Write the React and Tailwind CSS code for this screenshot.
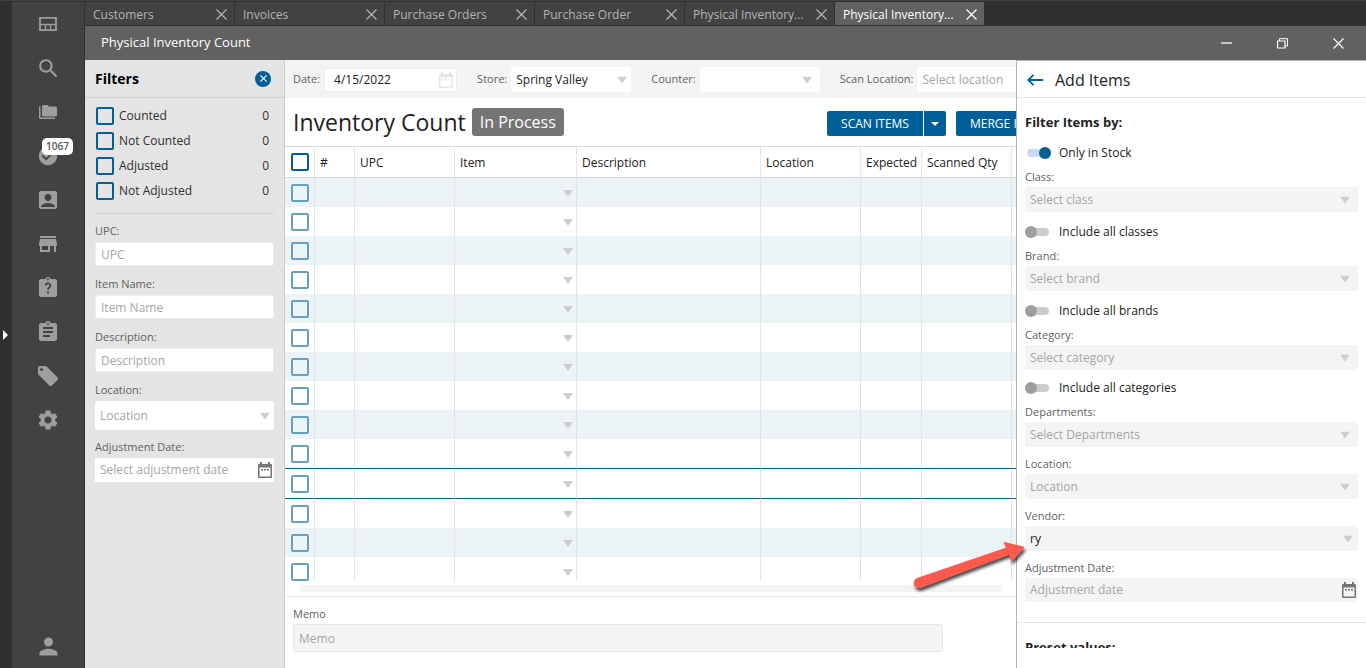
import { useState } from "react";
import clsx from "clsx";
import {
  MdSearch,
  MdCheckCircle,
  MdAccountBox,
  MdAssignment,
  MdSettings,
  MdPerson,
} from "react-icons/md";

const TABS = [
  "Customers",
  "Invoices",
  "Purchase Orders",
  "Purchase Order",
  "Physical Inventory...",
  "Physical Inventory...",
];

const COUNT_FILTERS = ["Counted", "Not Counted", "Adjusted", "Not Adjusted"];

const COLUMNS = [
  { label: "#", width: "w-[40px]" },
  { label: "UPC", width: "w-[100px]" },
  { label: "Item", width: "w-[122px]" },
  { label: "Description", width: "w-[184px]" },
  { label: "Location", width: "w-[100px]" },
  { label: "Expected", width: "w-[61px]" },
  { label: "Scanned Qty", width: "w-[90px]" },
  { label: "", width: "w-[90px]" },
];

const ROWS = Array.from({ length: 14 }, (_, i) => i);
const SELECTED_ROW = 10;

/* ---------- icons ---------- */

function CloseIcon({ className }) {
  return (
    <svg viewBox="0 0 11 11" className={clsx("w-[11px] h-[11px]", className)} stroke="currentColor" strokeWidth="1.2" fill="none">
      <path d="M0.5 0.5 10.5 10.5M10.5 0.5 0.5 10.5" />
    </svg>
  );
}

function Caret({ className }) {
  return (
    <svg viewBox="0 0 10 7" className={clsx("w-[10px] h-[7px] text-[#cdcdcd]", className)} fill="currentColor">
      <path d="M0 0h10L5 7z" />
    </svg>
  );
}

function CalendarIcon({ className }) {
  return (
    <svg viewBox="0 0 14 16" className={clsx("w-[14px] h-[16px]", className)} fill="currentColor">
      <path fillRule="evenodd" d="M2 0h2v2h6V0h2v2h1a1 1 0 0 1 1 1v12a1 1 0 0 1-1 1H1a1 1 0 0 1-1-1V3a1 1 0 0 1 1-1h1zM1.500 5.500v9h11v-9z" />
      <path d="M3 7h2v1.500H3zM6 7h2v1.500H6zM9 7h2v1.500H9z" />
    </svg>
  );
}

function DashboardIcon() {
  return (
    <svg viewBox="0 0 24 24" className="w-6 h-6" fill="none" stroke="currentColor">
      <path strokeWidth="1.800" d="M4 5.900h16v12.200H4z" />
      <path strokeWidth="1.300" d="M4 12.500h16M9.500 12.500V18M14.500 12.500V18" />
    </svg>
  );
}

function FoldersIcon() {
  return (
    <svg viewBox="0 0 24 24" className="w-6 h-6" fill="currentColor">
      <path d="M7.500 5h4l1.500 1.500h6.500a1.500 1.500 0 0 1 1.500 1.500v7a1.500 1.500 0 0 1-1.500 1.500h-12A1.500 1.500 0 0 1 6 15V6.500A1.500 1.500 0 0 1 7.500 5z" />
      <path d="M3 6.500h1.500V17.500H19V19H4.500A1.500 1.500 0 0 1 3 17.500z" />
    </svg>
  );
}

function StoreIcon() {
  return (
    <svg viewBox="0 0 24 24" className="w-6 h-6" fill="currentColor">
      <path fillRule="evenodd" d="M4 4h16v2H4zM4 7h16l1 5v2h-1v6h-2v-6h-4v6H4v-6H3v-2zM6 14v4h6v-4z" />
    </svg>
  );
}

function HelpClipboardIcon() {
  return (
    <svg viewBox="0 0 24 24" className="w-6 h-6">
      <path fill="currentColor" fillRule="evenodd" d="M19 3h-4.200a3 3 0 0 0-5.600 0H5a2 2 0 0 0-2 2v14a2 2 0 0 0 2 2h14a2 2 0 0 0 2-2V5a2 2 0 0 0-2-2zM12 2.600a.9.9 0 1 1 0 1.800.9.9 0 0 1 0-1.800z" />
      <path d="M9.700 9.600a2.300 2.300 0 1 1 3.700 1.800c-.9.700-1.400 1-1.400 2.400" fill="none" stroke="#424242" strokeWidth="1.800" />
      <path d="M11 15.500h2v2h-2z" fill="#424242" />
    </svg>
  );
}

function TagIcon() {
  return (
    <svg viewBox="0 0 24 24" className="w-6 h-6" fill="currentColor">
      <path fillRule="evenodd" d="M4 2h5a3 3 0 0 1 2.100.9l10.300 10.300a2 2 0 0 1 0 2.800L16 21.400a2 2 0 0 1-2.800 0L2.900 11.100A3 3 0 0 1 2 9V4a2 2 0 0 1 2-2zM5.500 4a1.500 1.500 0 1 0 0 3 1.500 1.500 0 0 0 0-3z" />
    </svg>
  );
}

/* ---------- form parts ---------- */

function Checkbox({ id, faded, label }) {
  return (
    <input
      type="checkbox"
      id={id}
      aria-label={label}
      className={clsx(
        "appearance-none block shrink-0 w-[18px] h-[18px] border-2 rounded-xs checked:bg-[#005f96]",
        faded ? "border-[#64a0c4]" : "border-[#005f96]"
      )}
    />
  );
}

function Select({ id, value, filled, className, caret = "right-2" }) {
  return (
    <div className="relative">
      <select
        id={id}
        defaultValue={value}
        className={clsx(
          "appearance-none block w-full rounded-xs pl-[5px] pr-5 text-[12px] outline-none",
          filled ? "text-[#212121]" : "text-[#a5a5a5]",
          className
        )}
      >
        <option>{value}</option>
      </select>
      <Caret className={clsx("absolute top-1/2 -translate-y-1/2 pointer-events-none", caret)} />
    </div>
  );
}

function FilterLabel({ htmlFor, children }) {
  return (
    <label htmlFor={htmlFor} className="block h-5 leading-5 text-[11px] text-[#616161]">
      {children}
    </label>
  );
}

function Toggle({ label, defaultChecked, className }) {
  const [on, setOn] = useState(!!defaultChecked);
  return (
    <label className={clsx("flex items-center h-4 mb-[6px] text-[12px] text-[#212121]", className)}>
      <input
        type="checkbox"
        role="switch"
        checked={on}
        onChange={() => setOn(!on)}
        className={clsx(
          "appearance-none relative w-6 h-2 rounded-full",
          "before:absolute before:-top-[2px] before:w-3 before:h-3 before:rounded-full",
          on
            ? "ml-[2px] mr-2 bg-[#c9d8fb] before:right-0 before:bg-[#005f96]"
            : "mr-[10px] bg-[#cccccc] before:left-0 before:bg-[#9e9e9e]"
        )}
      />
      {label}
    </label>
  );
}

/* ---------- page parts ---------- */

function NavButton({ label, children, badge }) {
  return (
    <button aria-label={label} className="relative flex items-center justify-center w-full h-11 text-[#9e9e9e]">
      {children}
      {badge && (
        <span className="absolute left-[30px] top-1 h-[17px] px-1 rounded-[5px] bg-white text-[10px] leading-[17px] font-semibold text-[#555]">
          {badge}
        </span>
      )}
    </button>
  );
}

function Sidebar() {
  return (
    <nav className="flex flex-col w-[73px] shrink-0 bg-[#424242] border-r border-[#303030]">
      <NavButton label="Dashboard"><DashboardIcon /></NavButton>
      <NavButton label="Search"><MdSearch size={25} /></NavButton>
      <NavButton label="Files"><FoldersIcon /></NavButton>
      <NavButton label="Tasks" badge="1067"><MdCheckCircle size={22} /></NavButton>
      <NavButton label="Contacts"><MdAccountBox size={24} /></NavButton>
      <NavButton label="Store"><StoreIcon /></NavButton>
      <NavButton label="Help"><HelpClipboardIcon /></NavButton>
      <NavButton label="Orders"><MdAssignment size={24} /></NavButton>
      <NavButton label="Tags"><TagIcon /></NavButton>
      <NavButton label="Settings"><MdSettings size={24} /></NavButton>
      <div className="mt-auto">
        <NavButton label="Account"><MdPerson size={27} /></NavButton>
      </div>
    </nav>
  );
}

function TabBar() {
  return (
    <div className="flex h-6 bg-[#303030] border-b border-[#303030]">
      {TABS.map((tab, i) => {
        const active = i === TABS.length - 1;
        return (
          <div
            key={i}
            className={clsx(
              "flex items-center justify-between w-[150px] pl-2 pr-[7px] pt-[2px] border-r border-[#303030] text-[12px]",
              active ? "bg-[#616161] text-white" : "bg-[#424242] text-[#b5b5b5]"
            )}
          >
            <a href="#">{tab}</a>
            <button aria-label={"Close " + tab}><CloseIcon /></button>
          </div>
        );
      })}
    </div>
  );
}

function TitleBar() {
  return (
    <header className="flex items-center h-[34px] pl-4 bg-[#616161] text-white">
      <h1 className="mr-auto text-[13px]">Physical Inventory Count</h1>
      <button aria-label="Minimize" className="flex justify-center w-14">
        <span className="w-[11px] h-[2px] bg-[#c4c4c4]" />
      </button>
      <button aria-label="Restore" className="flex justify-center w-14">
        <svg viewBox="0 0 11 11" className="w-[11px] h-[11px]" fill="none" stroke="currentColor">
          <path d="M0.5 3h7.500v7H0.5z" strokeWidth="1.200" />
          <path d="M2.500 3V0.700h8v7.300H8" />
        </svg>
      </button>
      <button aria-label="Close" className="flex justify-center w-14"><CloseIcon /></button>
    </header>
  );
}

function FiltersPanel() {
  return (
    <aside className="w-[200px] shrink-0 bg-[#e4e4e4] border-r border-[#cbcbcb]">
      <div className="flex items-center justify-between h-[38px] pl-[10px] pr-[13px] border-b border-[#cfcfcf]">
        <h2 className="text-[14px] font-bold text-black">Filters</h2>
        <button aria-label="Close filters" className="flex items-center justify-center w-4 h-4 rounded-full bg-[#005f96] text-white">
          <svg viewBox="0 0 8 8" className="w-[7px] h-[7px]" stroke="currentColor" strokeWidth="1.300">
            <path d="M0.500 0.500 7.500 7.500M7.500 0.500 0.500 7.500" />
          </svg>
        </button>
      </div>

      <div className="mx-[10px] pt-[5px] pb-[10px] border-b border-[#cfcfcf] text-[12px] text-[#303030]">
        {COUNT_FILTERS.map((name) => (
          <div key={name} className="flex items-center h-[25px] pl-px pr-[5px]">
            <Checkbox id={name} />
            <label htmlFor={name} className="pl-[5px] mr-auto">{name}</label>
            <span>0</span>
          </div>
        ))}
      </div>

      <form className="px-[10px] pt-[7px]">
        {["UPC", "Item Name", "Description"].map((name) => (
          <div key={name} className="grid gap-px mb-2">
            <FilterLabel htmlFor={"f-" + name}>{name}:</FilterLabel>
            <input
              id={"f-" + name}
              placeholder={name}
              className="block w-full h-6 px-[5px] rounded-xs border border-[#ececec] bg-white text-[12px] placeholder:text-[#a5a5a5] outline-none"
            />
          </div>
        ))}
        <div className="grid gap-px mb-[7px]">
          <FilterLabel htmlFor="f-location">Location:</FilterLabel>
          <Select id="f-location" value="Location" className="h-[29px] bg-white" caret="right-1" />
        </div>
        <div className="grid gap-px">
          <FilterLabel htmlFor="f-date">Adjustment Date:</FilterLabel>
          <div className="flex items-center h-6 pl-[5px] pr-[2px] bg-white">
            <input id="f-date" placeholder="Select adjustment date" className="flex-1 min-w-0 text-[12px] placeholder:text-[#a5a5a5] outline-none" />
            <CalendarIcon className="text-[#757575]" />
          </div>
        </div>
      </form>
    </aside>
  );
}

function Toolbar() {
  return (
    <div className="flex items-center h-[38px] pl-2 pt-px gap-5 bg-[#f4f4f4] text-[11px] text-[#616161] whitespace-nowrap">
      <div className="flex items-center gap-1 shrink-0">
        <label htmlFor="t-date">Date:</label>
        <div className="flex items-center w-[133px] h-6 pl-[9px] pr-[3px] rounded-xs border border-[#ececec] bg-white">
          <input id="t-date" defaultValue="4/15/2022" className="flex-1 min-w-0 text-[12px] text-[#212121] outline-none" />
          <CalendarIcon className="text-[#e6e6e6]" />
        </div>
      </div>
      <div className="flex items-center gap-1 shrink-0">
        <label htmlFor="t-store">Store:</label>
        <div className="w-[120px]"><Select id="t-store" value="Spring Valley" filled className="h-[25px] bg-white" caret="right-1" /></div>
      </div>
      <div className="flex items-center gap-1 shrink-0">
        <label htmlFor="t-counter">Counter:</label>
        <div className="w-[120px]"><Select id="t-counter" value="" className="h-[25px] bg-white" /></div>
      </div>
      <div className="flex items-center gap-1 shrink-0">
        <label htmlFor="t-scan">Scan Location:</label>
        <div className="w-[120px]"><Select id="t-scan" value="Select location" className="h-[25px] bg-white" /></div>
      </div>
    </div>
  );
}

function CountTable() {
  return (
    <div className="flex-1 min-h-0 overflow-hidden">
      <table className="table-fixed w-[817px] border-separate border-spacing-0 text-left text-[12px] text-[#212121]">
        <thead>
          <tr className="h-8">
            <th className="w-[30px] p-0 pl-[6px] border-y border-r border-y-[#d9d9d9] border-r-[#e6e6e6]">
              <Checkbox label="Select all" />
            </th>
            {COLUMNS.map((col, i) => (
              <th key={i} className={clsx("p-0 pt-[2px] pl-[5px] border-y border-r border-y-[#d9d9d9] border-r-[#e6e6e6] font-normal whitespace-nowrap", col.width)}>
                {col.label}
              </th>
            ))}
          </tr>
        </thead>
        <tbody>
          {ROWS.map((i) => {
            const selected = i === SELECTED_ROW;
            const cell = clsx(
              "p-0 border-r border-r-[#dfe4e6]",
              selected && "border-y border-y-[#005f96]"
            );
            // striping restarts after the selected row
            const shaded = i < SELECTED_ROW ? i % 2 === 0 : i === 12;
            return (
              <tr key={i} className={clsx(selected ? "h-[31px]" : "h-[29px]", shaded && "bg-[#ebf3f7]")}>
                <td className={clsx(cell, "pl-[6px]")}>
                  <Checkbox label={"Select row " + (i + 1)} faded />
                </td>
                {COLUMNS.map((col, c) => (
                  <td key={c} className={cell}>
                    {col.label === "Item" && <Caret className="ml-auto mr-[3px] mt-[2px]" />}
                  </td>
                ))}
              </tr>
            );
          })}
        </tbody>
      </table>
    </div>
  );
}

function CountSheet() {
  return (
    <main className="flex flex-col flex-1 min-w-0 overflow-hidden bg-white">
      <Toolbar />
      <div className="flex items-center h-12 pl-2 shrink-0 whitespace-nowrap">
        <div className="flex items-center gap-[6px] w-[534px] shrink-0">
          <h2 className="text-[23px] leading-7 text-[#212121]">Inventory Count</h2>
          <span className="h-7 px-2 rounded-[3px] bg-[#757575] text-white text-[16px] leading-7">In Process</span>
        </div>
        <div className="flex h-[25px] mt-[3px] text-[12px] text-white">
          <button className="w-24 shrink-0 rounded-l-xs bg-[#005f96]">SCAN ITEMS</button>
          <button aria-label="More scan options" className="flex items-center justify-center w-[22px] ml-px mr-[10px] shrink-0 rounded-r-xs bg-[#005f96]">
            <svg viewBox="0 0 8 4" className="w-2 h-1" fill="currentColor"><path d="M0 0h8L4 4z" /></svg>
          </button>
          <button className="px-[14px] shrink-0 rounded-l-xs bg-[#005f96]">MERGE ITEMS</button>
        </div>
      </div>
      <CountTable />
      <div className="h-4 pt-1 pl-[15px] pr-[14px] shrink-0 border-b border-[#e6e6e6]">
        <div className="h-[7px] bg-[#f4f4f4]" />
      </div>
      <div className="h-[71px] pt-[7px] pl-2 shrink-0">
        <FilterLabel htmlFor="memo">Memo</FilterLabel>
        <input
          id="memo"
          placeholder="Memo"
          className="block w-[650px] max-w-full h-7 px-[5px] rounded-xs border border-[#e8e8e8] bg-[#f4f4f4] text-[12px] placeholder:text-[#a5a5a5] outline-none"
        />
      </div>
    </main>
  );
}

function DrawerSelect({ name, value, filled, className, caret }) {
  return (
    <div className={className}>
      <FilterLabel htmlFor={"d-" + name}>{name}:</FilterLabel>
      <Select id={"d-" + name} value={value} filled={filled} caret={caret} className="h-[25px] bg-[#f4f4f4]" />
    </div>
  );
}

function AddItemsDrawer() {
  return (
    <aside className="flex flex-col w-[350px] shrink-0 border-l border-t border-[#b5b5b5] bg-white">
      <div className="flex items-center h-[37px] shrink-0 pt-px pl-[10px] border-b border-[#e6e6e6]">
        <button aria-label="Back" className="text-[#005f96]">
          <svg viewBox="0 0 16 12" className="w-4 h-3" fill="none" stroke="currentColor" strokeWidth="1.800">
            <path d="M16 6H1.500M6.500 0.800 1.300 6l5.200 5.200" />
          </svg>
        </button>
        <h2 className="pl-3 text-[16px] text-[#212121]">Add Items</h2>
      </div>

      <form className="px-2 pt-[14px] pb-5 border-b border-[#e6e6e6]">
        <h3 className="h-5 leading-5 text-[13px] font-bold text-[#212121]">Filter Items by:</h3>
        <Toggle label="Only in Stock" defaultChecked className="mt-[13px]" />
        <DrawerSelect name="Class" value="Select class" />
        <Toggle label="Include all classes" className="mt-3" />
        <DrawerSelect name="Brand" value="Select brand" />
        <Toggle label="Include all brands" className="mt-3" />
        <DrawerSelect name="Category" value="Select category" />
        <Toggle label="Include all categories" className="mt-[10px]" />
        <DrawerSelect name="Departments" value="Select Departments" />
        <DrawerSelect name="Location" value="Location" className="mt-[7px]" />
        <DrawerSelect name="Vendor" value="ry" filled caret="right-[5px]" className="mt-[7px]" />
        <div className="mt-[7px]">
          <FilterLabel htmlFor="d-date">Adjustment Date:</FilterLabel>
          <div className="flex items-center h-6 pl-[5px] pr-[2px] bg-[#f4f4f4]">
            <input id="d-date" placeholder="Adjustment date" className="flex-1 min-w-0 text-[12px] placeholder:text-[#a5a5a5] outline-none" />
            <CalendarIcon className="text-[#757575]" />
          </div>
        </div>
      </form>

      <div className="flex-1 min-h-0 px-2 pt-[14px] mb-5 overflow-hidden">
        <h3 className="h-5 leading-5 text-[13px] font-bold text-[#212121]">Preset values:</h3>
      </div>
    </aside>
  );
}

function PointerArrow() {
  return (
    <svg viewBox="0 0 124 60" className="absolute left-[908px] top-[536px] w-[124px] h-[60px] pointer-events-none">
      <defs>
        <filter id="arrowShadow" x="-10%" y="-10%" width="130%" height="150%">
          <feDropShadow dx="1.500" dy="3" stdDeviation="1.500" floodColor="#000" floodOpacity="0.7" />
        </filter>
      </defs>
      <path
        filter="url(#arrowShadow)"
        fill="#ff5a4b"
        d="M9 42 98.500 11.500 95.500 6.500Q95.500 5.800 96.500 5.900L115.500 10.600Q116.800 11.200 115.800 12.300L104.500 24.500Q103.200 25.500 102.500 24L101.500 18.500 12.500 51.800C5 53.500 3.500 44.500 9 42z"
      />
    </svg>
  );
}

export default function App() {
  return (
    <div className="relative flex flex-col h-screen overflow-hidden font-['Open_Sans','Noto_Sans',sans-serif] bg-[#303030]">
      <div className="h-px shrink-0 bg-[#424242]" />
      <div className="flex flex-1 min-h-0 pt-px">
        <button aria-label="Expand menu" className="flex items-center w-3 pl-[3px] shrink-0">
          <svg viewBox="0 0 5 10" className="w-[5px] h-[10px]" fill="white"><path d="M0 0 5 5 0 10z" /></svg>
        </button>
        <Sidebar />
        <div className="flex flex-col flex-1 min-w-0">
          <TabBar />
          <TitleBar />
          <div className="flex flex-1 min-h-0">
            <FiltersPanel />
            <CountSheet />
            <AddItemsDrawer />
          </div>
        </div>
      </div>
      <PointerArrow />
    </div>
  );
}
